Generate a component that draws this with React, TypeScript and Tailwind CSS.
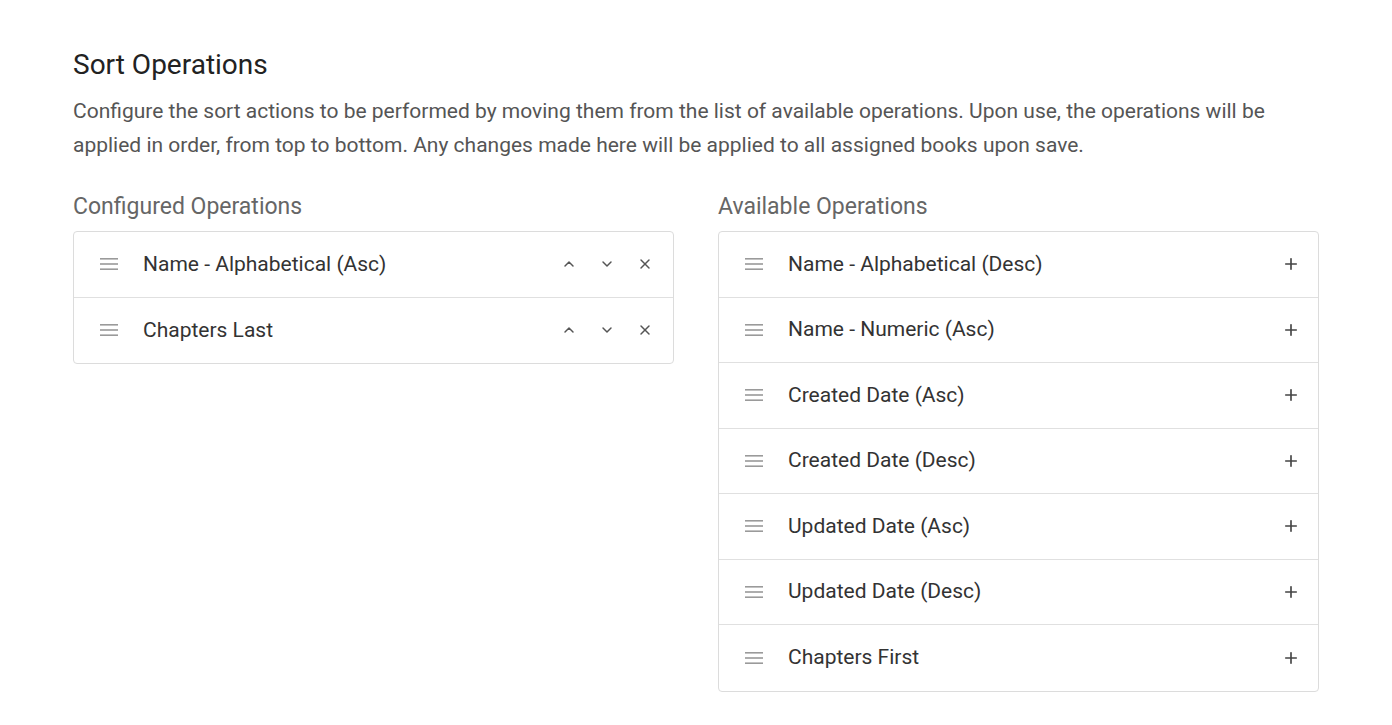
import { ChevronUp, ChevronDown, X, Plus } from "lucide-react";

const configured = ["Name - Alphabetical (Asc)", "Chapters Last"];

const available = [
    "Name - Alphabetical (Desc)",
    "Name - Numeric (Asc)",
    "Created Date (Asc)",
    "Created Date (Desc)",
    "Updated Date (Asc)",
    "Updated Date (Desc)",
    "Chapters First",
];

function DragHandle() {
    return (
        <svg width="18" height="12" viewBox="0 0 18 12" className="shrink-0">
            <rect x="0" y="0" width="18" height="1.6" fill="#9a9a9a" />
            <rect x="0" y="5.2" width="18" height="1.6" fill="#9a9a9a" />
            <rect x="0" y="10.4" width="18" height="1.6" fill="#9a9a9a" />
        </svg>
    );
}

function Row({ label, children }: { label: string; children: React.ReactNode }) {
    return (
        <div className="flex h-[65.5px] items-center border-b border-[#e0e0e0] pl-[26px] pr-[18px] last:border-b-0">
            <DragHandle />
            <span className="ml-[25px] flex-1 text-[21px] text-[#333]">{label}</span>
            {children}
        </div>
    );
}

export default function App() {
    return (
        <div
            className="min-h-screen bg-white px-[73px] pt-[48px]"
            style={{ fontFamily: "Roboto, 'Liberation Sans', sans-serif" }}
        >
            <h2 className="text-[28px] leading-[34px] text-[#222]">Sort Operations</h2>
            <p className="mt-[12px] w-[1246px] text-[21px] leading-[34px] text-[#555]">
                Configure the sort actions to be performed by moving them from the list of available operations. Upon use, the operations will be applied in order, from top to bottom. Any changes made here will be applied to all assigned books upon save.
            </p>

            <div className="mt-[30px] grid w-[1246px] grid-cols-2 gap-[44px]">
                <div>
                    <h3 className="text-[23px] leading-[30px] text-[#666]">Configured Operations</h3>
                    <div className="mt-[9px] rounded-[4px] border border-[#dcdcdc]">
                        {configured.map((c) => (
                            <Row key={c} label={c}>
                                <div className="mr-[2px] flex items-center gap-[22px] text-[#555]">
                                    <ChevronUp size={16} strokeWidth={2.2} />
                                    <ChevronDown size={16} strokeWidth={2.2} />
                                    <X size={16} strokeWidth={2.2} />
                                </div>
                            </Row>
                        ))}
                    </div>
                </div>
                <div>
                    <h3 className="text-[23px] leading-[30px] text-[#666]">Available Operations</h3>
                    <div className="mt-[9px] rounded-[4px] border border-[#dcdcdc]">
                        {available.map((a) => (
                            <Row key={a} label={a}>
                                <Plus size={18} strokeWidth={2.2} className="text-[#444]" />
                            </Row>
                        ))}
                    </div>
                </div>
            </div>
        </div>
    );
}
